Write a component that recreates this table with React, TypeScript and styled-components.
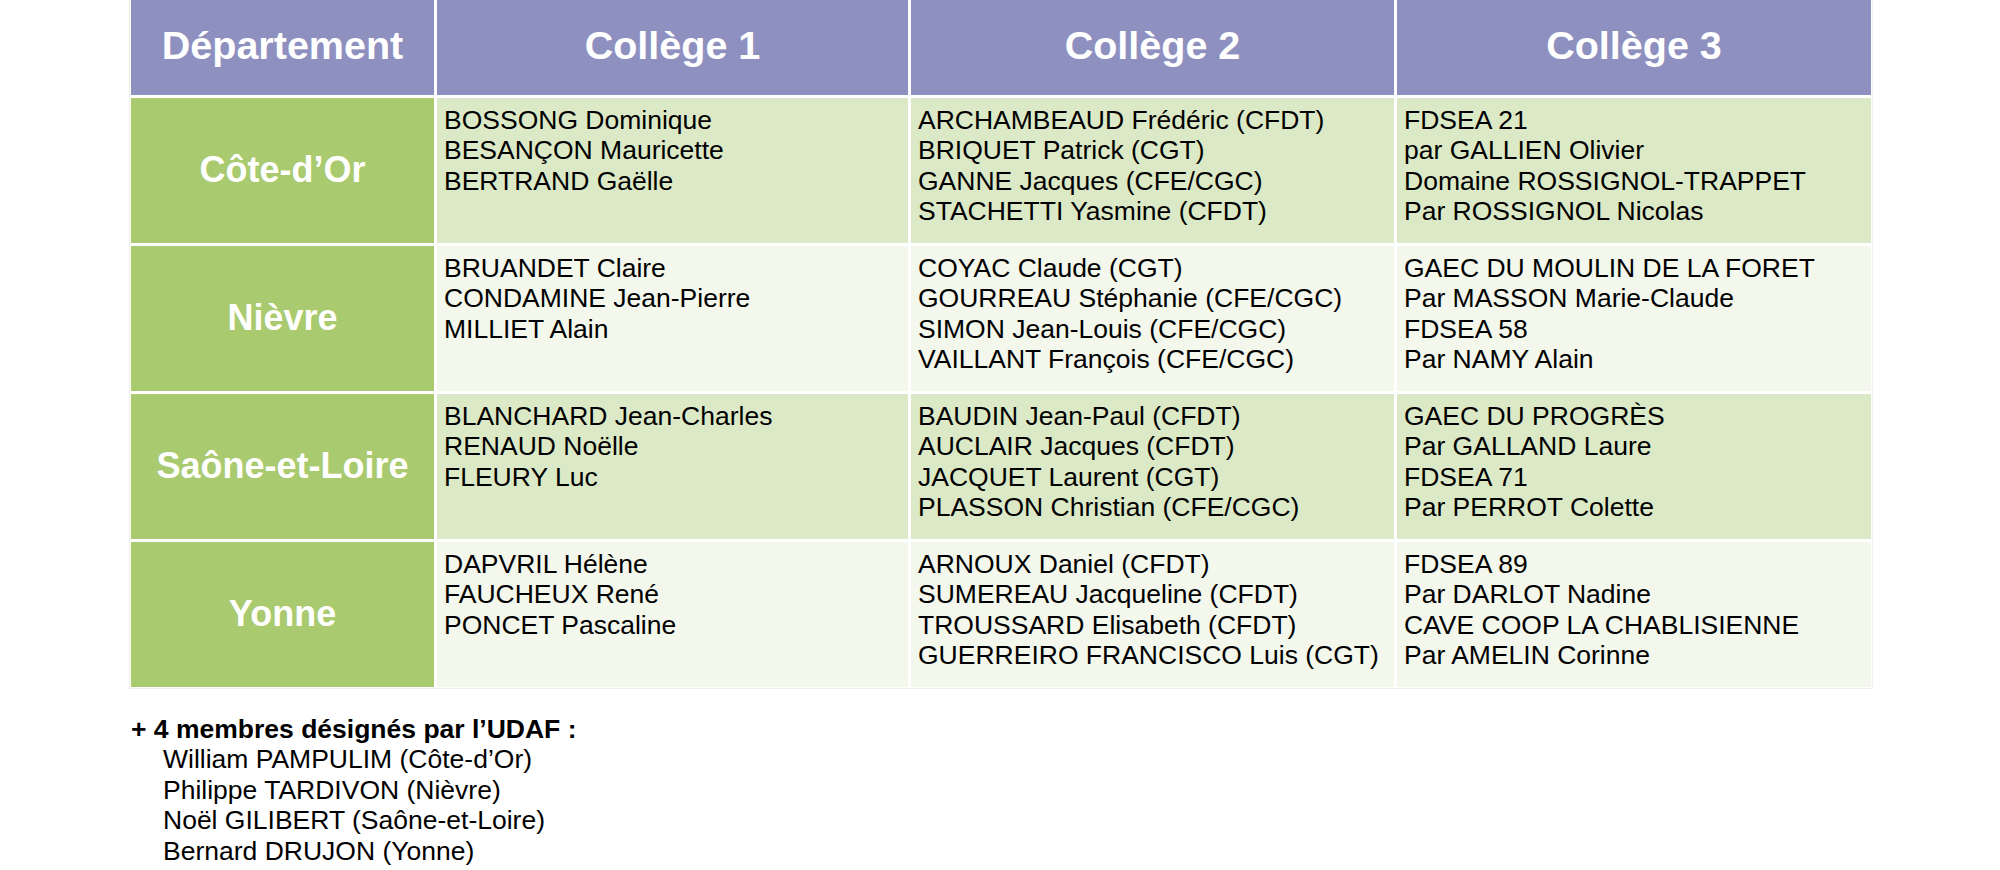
import styled, { createGlobalStyle } from "styled-components";

const GlobalStyle = createGlobalStyle`
  html, body {
    margin: 0;
    padding: 0;
    background: #ffffff;
    overflow: hidden;
  }
  body {
    font-family: "Liberation Sans", Arial, sans-serif;
    color: #000;
  }
`;

const Page = styled.div`
  width: 2000px;
  height: 870px;
  padding-left: 131px;
  box-sizing: border-box;
`;

const Table = styled.div`
  display: grid;
  grid-template-columns: 303px 471px 483px 474px;
  grid-template-rows: 95px repeat(4, 145.5px);
  column-gap: 3px;
  row-gap: 2.5px;
  width: 1740px;
  background: #ffffff;
  outline: 1px solid #eef1e8;
  outline-offset: 1px;
`;

const HeadCell = styled.div`
  background: #8e90c0;
  color: #ffffff;
  font-weight: 700;
  font-size: 39.5px;
  display: flex;
  align-items: center;
  justify-content: center;
  padding-bottom: 4px;
  box-sizing: border-box;
`;

const DeptCell = styled.div`
  background: #a9ca6e;
  color: #ffffff;
  font-weight: 700;
  font-size: 36px;
  display: flex;
  align-items: center;
  justify-content: center;
`;

const BodyCell = styled.div<{ $odd: boolean }>`
  background: ${({ $odd }) => ($odd ? "#dce9c6" : "#f3f7ec")};
  padding: 7px 8px 0 7px;
  font-size: 26.5px;
  line-height: 30.5px;
  white-space: nowrap;
  box-sizing: border-box;
`;

const Line = styled.div``;

const Footer = styled.div`
  margin-top: 26.5px;
  font-size: 26.5px;
  line-height: 30.5px;
`;

const FooterTitle = styled.div`
  font-weight: 700;
`;

const FooterItem = styled.div`
  padding-left: 32px;
`;

interface Row {
  dept: string;
  cols: string[][];
}

const rows: Row[] = [
  {
    dept: "Côte-d’Or",
    cols: [
      ["BOSSONG Dominique", "BESANÇON Mauricette", "BERTRAND Gaëlle"],
      [
        "ARCHAMBEAUD Frédéric (CFDT)",
        "BRIQUET Patrick (CGT)",
        "GANNE Jacques (CFE/CGC)",
        "STACHETTI Yasmine (CFDT)",
      ],
      [
        "FDSEA 21",
        "par GALLIEN Olivier",
        "Domaine ROSSIGNOL-TRAPPET",
        "Par ROSSIGNOL Nicolas",
      ],
    ],
  },
  {
    dept: "Nièvre",
    cols: [
      ["BRUANDET Claire", "CONDAMINE Jean-Pierre", "MILLIET Alain"],
      [
        "COYAC Claude (CGT)",
        "GOURREAU Stéphanie (CFE/CGC)",
        "SIMON Jean-Louis (CFE/CGC)",
        "VAILLANT François (CFE/CGC)",
      ],
      [
        "GAEC DU MOULIN DE LA FORET",
        "Par MASSON Marie-Claude",
        "FDSEA 58",
        "Par NAMY Alain",
      ],
    ],
  },
  {
    dept: "Saône-et-Loire",
    cols: [
      ["BLANCHARD Jean-Charles", "RENAUD Noëlle", "FLEURY Luc"],
      [
        "BAUDIN Jean-Paul (CFDT)",
        "AUCLAIR Jacques (CFDT)",
        "JACQUET Laurent (CGT)",
        "PLASSON Christian (CFE/CGC)",
      ],
      ["GAEC DU PROGRÈS", "Par GALLAND Laure", "FDSEA 71", "Par PERROT Colette"],
    ],
  },
  {
    dept: "Yonne",
    cols: [
      ["DAPVRIL Hélène", "FAUCHEUX René", "PONCET Pascaline"],
      [
        "ARNOUX Daniel (CFDT)",
        "SUMEREAU Jacqueline (CFDT)",
        "TROUSSARD Elisabeth (CFDT)",
        "GUERREIRO FRANCISCO Luis (CGT)",
      ],
      [
        "FDSEA 89",
        "Par DARLOT Nadine",
        "CAVE COOP LA CHABLISIENNE",
        "Par AMELIN Corinne",
      ],
    ],
  },
];

const udaf = [
  "William PAMPULIM (Côte-d’Or)",
  "Philippe TARDIVON (Nièvre)",
  "Noël GILIBERT (Saône-et-Loire)",
  "Bernard DRUJON (Yonne)",
];

export default function App() {
  return (
    <Page>
      <GlobalStyle />
      <Table>
        <HeadCell>Département</HeadCell>
        <HeadCell>Collège 1</HeadCell>
        <HeadCell>Collège 2</HeadCell>
        <HeadCell>Collège 3</HeadCell>
        {rows.map((row, i) => [
          <DeptCell key={`d${i}`}>{row.dept}</DeptCell>,
          ...row.cols.map((col, j) => (
            <BodyCell key={`c${i}-${j}`} $odd={i % 2 === 0}>
              {col.map((name) => (
                <Line key={name}>{name}</Line>
              ))}
            </BodyCell>
          )),
        ])}
      </Table>
      <Footer>
        <FooterTitle>+ 4 membres désignés par l’UDAF :</FooterTitle>
        {udaf.map((name) => (
          <FooterItem key={name}>{name}</FooterItem>
        ))}
      </Footer>
    </Page>
  );
}
